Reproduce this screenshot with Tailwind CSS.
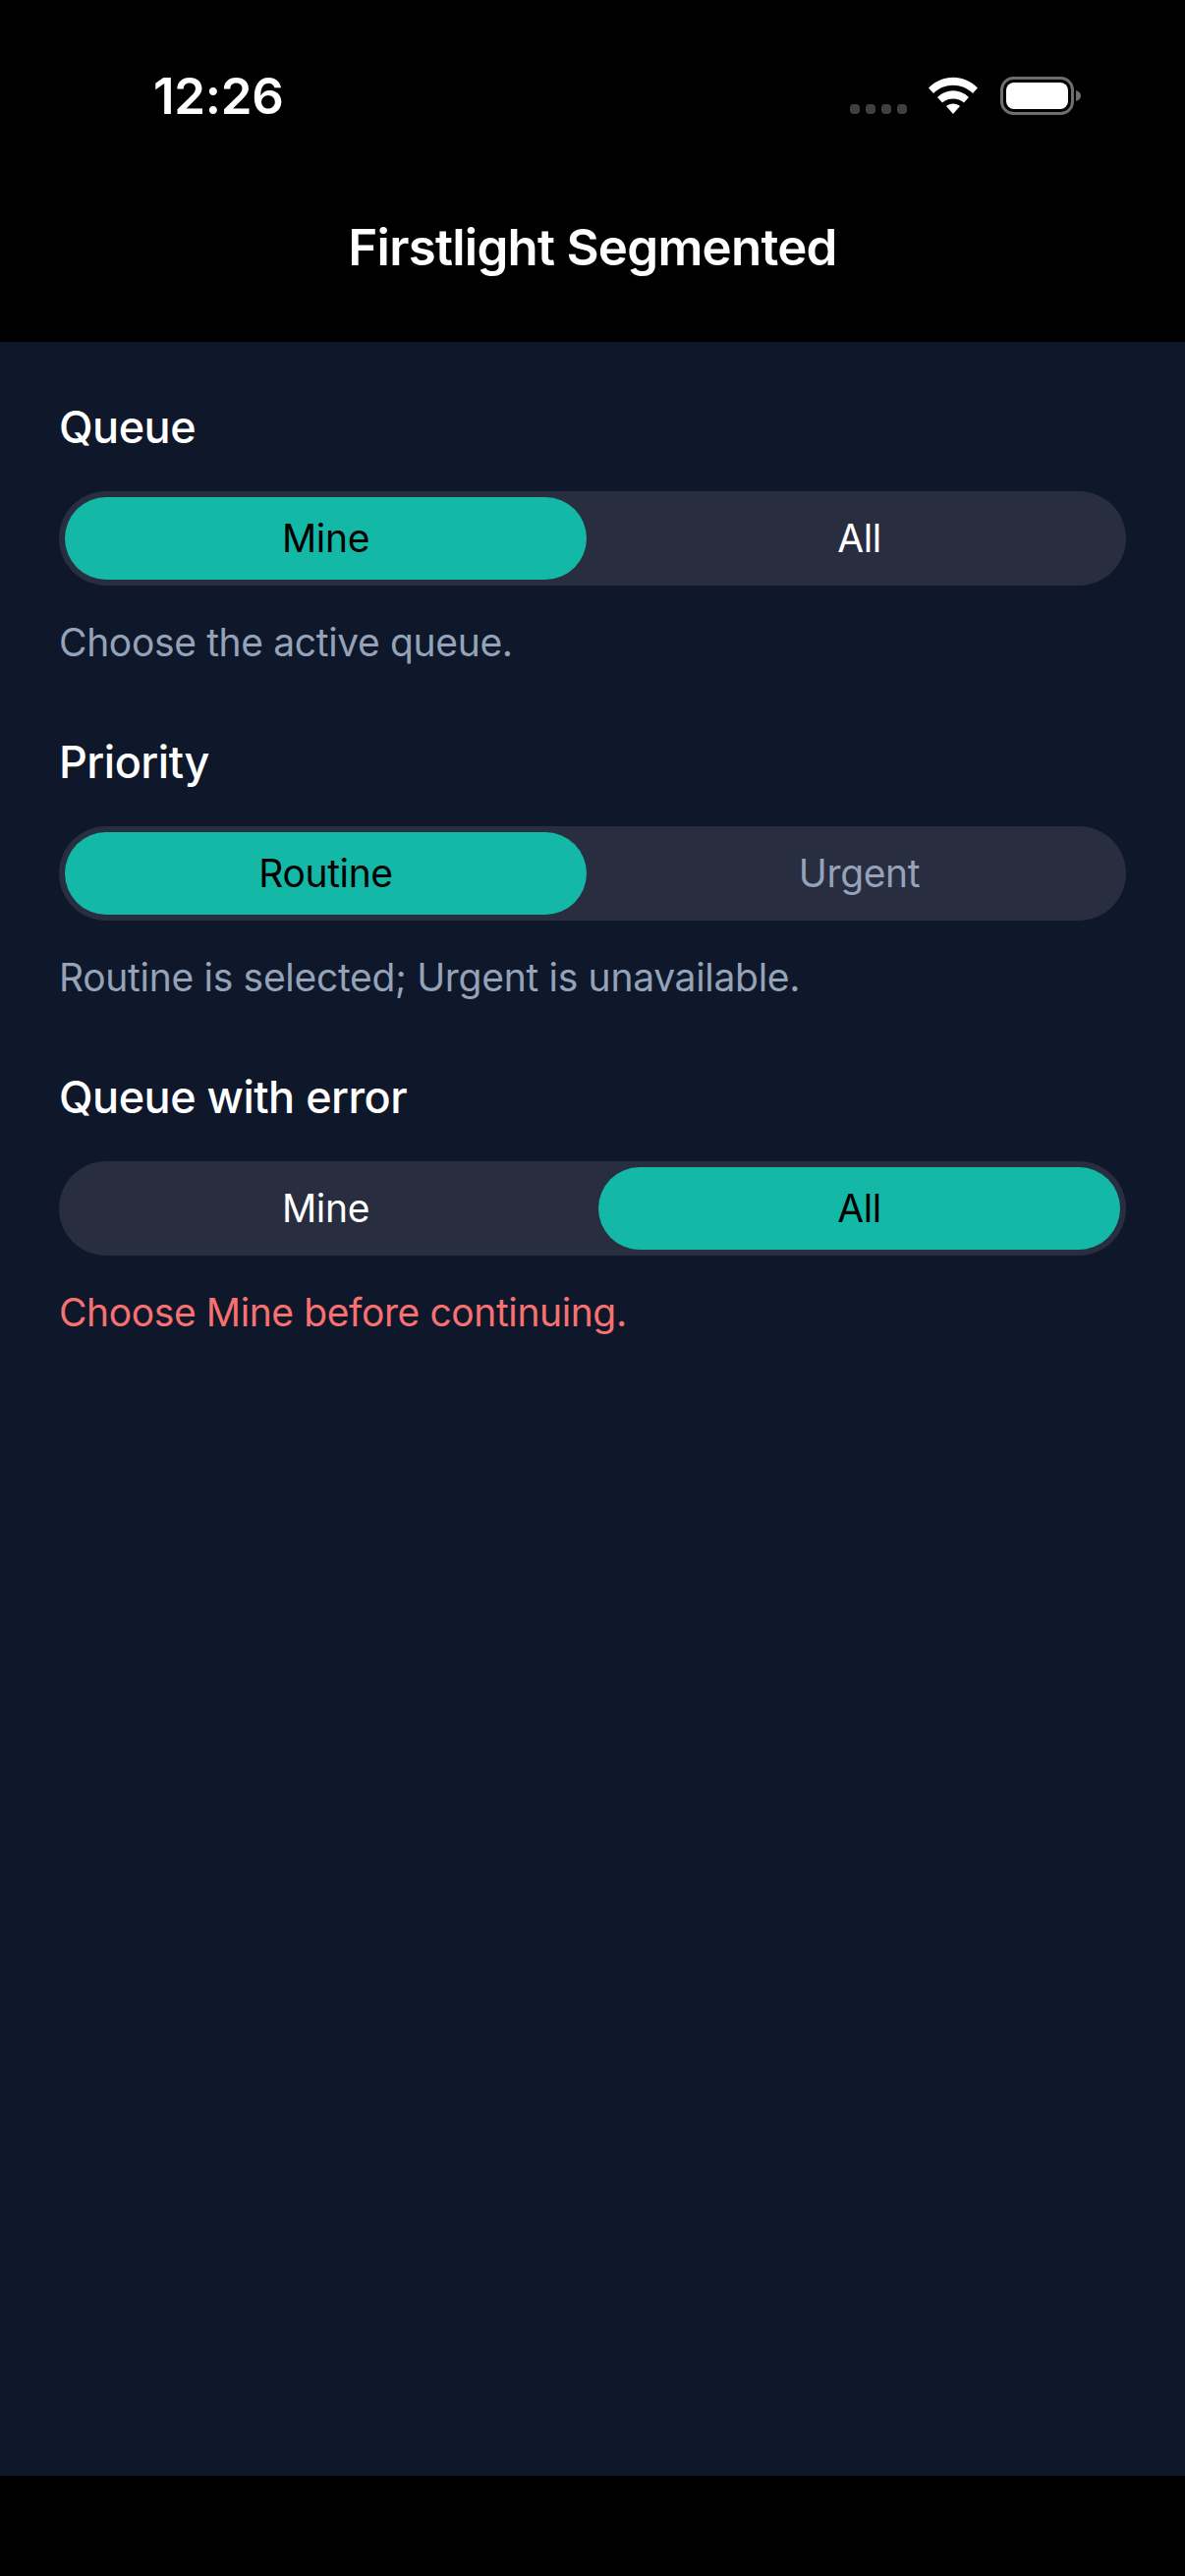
<!DOCTYPE html>
<html lang="en">
<head>
  <meta charset="UTF-8" />
  <meta name="viewport" content="width=device-width, initial-scale=1.0" />
  <title>Firstlight Segmented</title>
  <script src="https://cdn.jsdelivr.net/npm/@tailwindcss/browser@4"></script>
</head>
<body class="bg-black font-['Inter',sans-serif] text-white">
  <div class="flex h-[2622px] w-[1206px] flex-col">
    <header class="h-[348px] shrink-0 bg-black">
      <div class="flex h-[221px] items-start justify-between pt-[67px] pl-[156px] pr-[104px]">
        <span class="text-[51px] leading-[62px] font-semibold tracking-[-0.3px]">12:26</span>
        <svg class="mt-[11px]" width="238" height="40" viewBox="864 78 238 40" fill="none">
          <rect x="865" y="106" width="10" height="10" rx="4" fill="#404040" />
          <rect x="881" y="106" width="10" height="10" rx="4" fill="#404040" />
          <rect x="897" y="106" width="10" height="10" rx="4" fill="#404040" />
          <rect x="913" y="106" width="10" height="10" rx="4" fill="#404040" />
          <path d="M945 89.500C959 75 981 75 995 89.500L990 95C979 84 961 84 950 95Z" fill="#fff" />
          <path d="M954 99C963 90 977 90 986 99L981 104.500C975 99 965 99 959 104.500Z" fill="#fff" />
          <path d="M963 108C967 104.500 973 104.500 977 108L970 116Z" fill="#fff" />
          <rect x="1019.500" y="79.500" width="72" height="36" rx="12" stroke="#6e6e6e" stroke-width="3" />
          <rect x="1024" y="84" width="63" height="27" rx="8" fill="#fff" />
          <path d="M1095 92C1098.500 93 1100 95 1100 97.500C1100 100 1098.500 102 1095 103Z" fill="#6e6e6e" />
        </svg>
      </div>
      <h1 class="text-center text-[51px] leading-[62px] font-semibold tracking-[-0.75px]">Firstlight Segmented</h1>
    </header>

    <main class="flex-1 bg-[#0f172a] px-[60px] pt-[60px]">
      <section class="h-[341px]">
        <h2 class="text-[45px] leading-[54px] font-medium tracking-[-0.5px]">Queue</h2>
        <div class="mt-[38px] flex h-[96px] gap-[12px] rounded-[48px] bg-[#282d40] p-[6px] text-[39px] tracking-[-0.35px]">
          <div class="flex flex-1 items-center justify-center rounded-[42px] bg-[#14b8a6] text-black">Mine</div>
          <div class="flex flex-1 items-center justify-center">All</div>
        </div>
        <p class="mt-[34px] text-[39px] leading-[48px] tracking-[-0.35px] text-[#94a3b8]">Choose the active queue.</p>
      </section>

      <section class="h-[341px]">
        <h2 class="text-[45px] leading-[54px] font-medium tracking-[-0.5px]">Priority</h2>
        <div class="mt-[38px] flex h-[96px] gap-[12px] rounded-[48px] bg-[#282d40] p-[6px] text-[39px] tracking-[-0.35px]">
          <div class="flex flex-1 items-center justify-center rounded-[42px] bg-[#14b8a6] text-black">Routine</div>
          <div class="flex flex-1 items-center justify-center text-[#94a3b8]">Urgent</div>
        </div>
        <p class="mt-[34px] text-[39px] leading-[48px] tracking-[-0.3px] text-[#94a3b8]">Routine is selected; Urgent is unavailable.</p>
      </section>

      <section>
        <h2 class="text-[45px] leading-[54px] font-medium tracking-[-0.5px]">Queue with error</h2>
        <div class="mt-[38px] flex h-[96px] gap-[12px] rounded-[48px] bg-[#282d40] p-[6px] text-[39px] tracking-[-0.35px]">
          <div class="flex flex-1 items-center justify-center">Mine</div>
          <div class="flex flex-1 items-center justify-center rounded-[42px] bg-[#14b8a6] text-black">All</div>
        </div>
        <p class="mt-[34px] text-[39px] leading-[48px] tracking-[-0.4px] text-[#f87171]">Choose Mine before continuing.</p>
      </section>
    </main>

    <div class="h-[102px] shrink-0 bg-black"></div>
  </div>
</body>
</html>
